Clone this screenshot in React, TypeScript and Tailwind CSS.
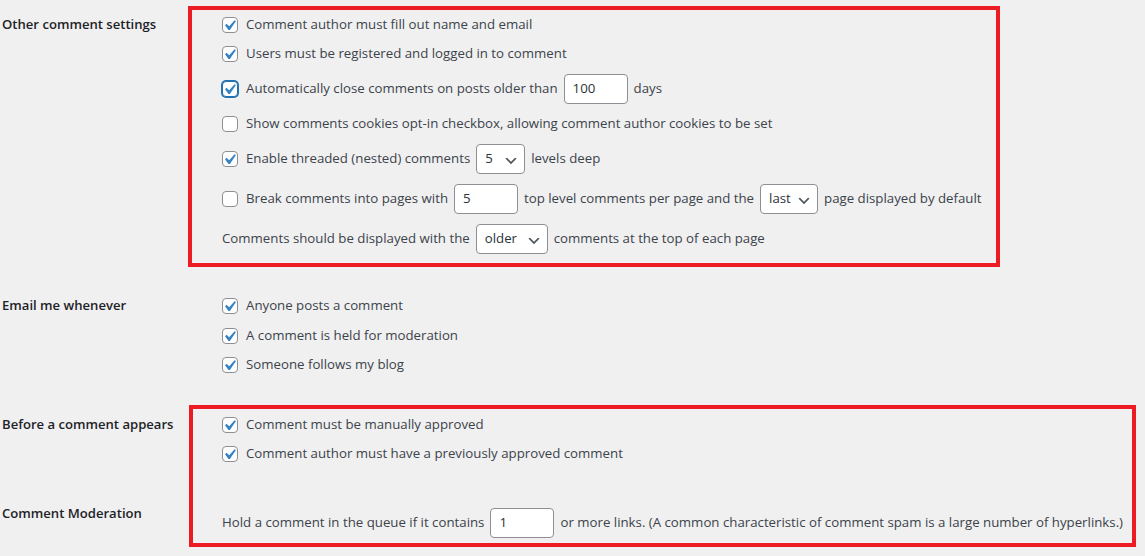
import React from 'react';

const font = { fontFamily: '"Open Sans", "Noto Sans", sans-serif' };

const Check = ({ checked = true, focus = false }: { checked?: boolean; focus?: boolean }) => (
  <span
    className={`relative inline-block w-4 h-4 shrink-0 rounded-[4px] bg-white border ${
      focus ? 'border-[#2271b1] shadow-[0_0_0_1px_#2271b1]' : 'border-[#8c8f94]'
    }`}
  >
    {checked && (
      <svg className="absolute -top-[3px] -left-[4px] w-[21px] h-[21px]" viewBox="0 0 20 20">
        <path d="M14.83 4.89l1.34.94-5.81 8.38H9.02L5.78 9.67l1.34-1.25 2.57 2.4z" fill="#3582c4" />
      </svg>
    )}
  </span>
);

const TextBox = ({ value }: { value: string }) => (
  <span className="flex shrink-0 items-center h-[30px] w-[64px] mx-[6px] px-2 rounded-[4px] border border-[#8c8f94] bg-white text-[#2c3338]">
    {value}
  </span>
);

const Select = ({ value, className }: { value: string; className: string }) => (
  <span
    className={`relative flex shrink-0 items-center h-[30px] mx-[6px] pl-2 rounded-[4px] border border-[#8c8f94] bg-white text-[#2c3338] ${className}`}
  >
    {value}
    <svg className="absolute right-[5px] top-[8px] w-4 h-4" viewBox="0 0 20 20">
      <path d="M5 6l5 5 5-5 2 1-7 7-7-7 2-1z" fill="#50575e" />
    </svg>
  </span>
);

const Row = ({ h, children }: { h: string; children: React.ReactNode }) => (
  <div className={`flex items-center whitespace-nowrap ${h}`}>{children}</div>
);

const CheckRow = ({ h, label, checked = true, focus = false }: { h: string; label: React.ReactNode; checked?: boolean; focus?: boolean }) => (
  <Row h={h}>
    <Check checked={checked} focus={focus} />
    <span className="ml-2 flex items-center">{label}</span>
  </Row>
);

export default function App() {
  return (
    <div className="min-h-[556px] w-[1145px] bg-[#f0f0f1] pl-[2px] text-[13.25px] text-[#3c434a] overflow-hidden" style={font}>
      {/* Other comment settings */}
      <div className="flex pt-[6px]">
        <div className="w-[186px] shrink-0 pt-[8px] text-[13.1px] font-semibold text-[#1d2327] leading-[20px]">Other comment settings</div>
        <div className="w-[812px] border-4 border-[#ed1c24] pl-[30px] pt-[1px] pb-[4px]">
          <CheckRow h="h-[28px]" label="Comment author must fill out name and email" />
          <CheckRow h="h-[29px]" label="Users must be registered and logged in to comment" />
          <CheckRow
            h="h-[41px]"
            focus
            label={
              <>
                Automatically close comments on posts older than <TextBox value="100" /> days
              </>
            }
          />
          <CheckRow h="h-[30px]" checked={false} label="Show comments cookies opt-in checkbox, allowing comment author cookies to be set" />
          <CheckRow
            h="h-[39px]"
            label={
              <>
                Enable threaded (nested) comments <Select value="5" className="w-[49px]" /> levels deep
              </>
            }
          />
          <CheckRow
            h="h-[41px]"
            checked={false}
            label={
              <>
                Break comments into pages with <TextBox value="5" /> top level comments per page and the{' '}
                <Select value="last" className="w-[58px]" /> page displayed by default
              </>
            }
          />
          <Row h="h-[40px]">
            Comments should be displayed with the <Select value="older" className="w-[72px]" /> comments at the top of each page
          </Row>
        </div>
      </div>

      {/* Email me whenever */}
      <div className="flex pt-[24px]">
        <div className="w-[186px] shrink-0 h-[30px] flex items-center text-[13.1px] font-semibold text-[#1d2327]">Email me whenever</div>
        <div className="pl-[34px]">
          <CheckRow h="h-[30px]" label="Anyone posts a comment" />
          <CheckRow h="h-[29px]" label="A comment is held for moderation" />
          <CheckRow h="h-[30px]" label="Someone follows my blog" />
        </div>
      </div>

      {/* Before a comment appears + Comment Moderation */}
      <div className="flex pt-[25px]">
        <div className="w-[187px] shrink-0 flex flex-col text-[13.1px] font-semibold text-[#1d2327] leading-[20px]">
          <div className="pt-[9px]">Before a comment appears</div>
          <div className="pt-[69px]">Comment Moderation</div>
        </div>
        <div className="w-[947px] border-4 border-[#ed1c24] pl-[29px] pt-[1px]">
          <CheckRow h="h-[30px]" label="Comment must be manually approved" />
          <CheckRow h="h-[28px]" label="Comment author must have a previously approved comment" />
          <div className="h-[35px]" />
          <Row h="h-[40px]">
            Hold a comment in the queue if it contains <TextBox value="1" /> or more links. (A common characteristic of comment spam is a large number of hyperlinks.)
          </Row>
        </div>
      </div>
    </div>
  );
}
